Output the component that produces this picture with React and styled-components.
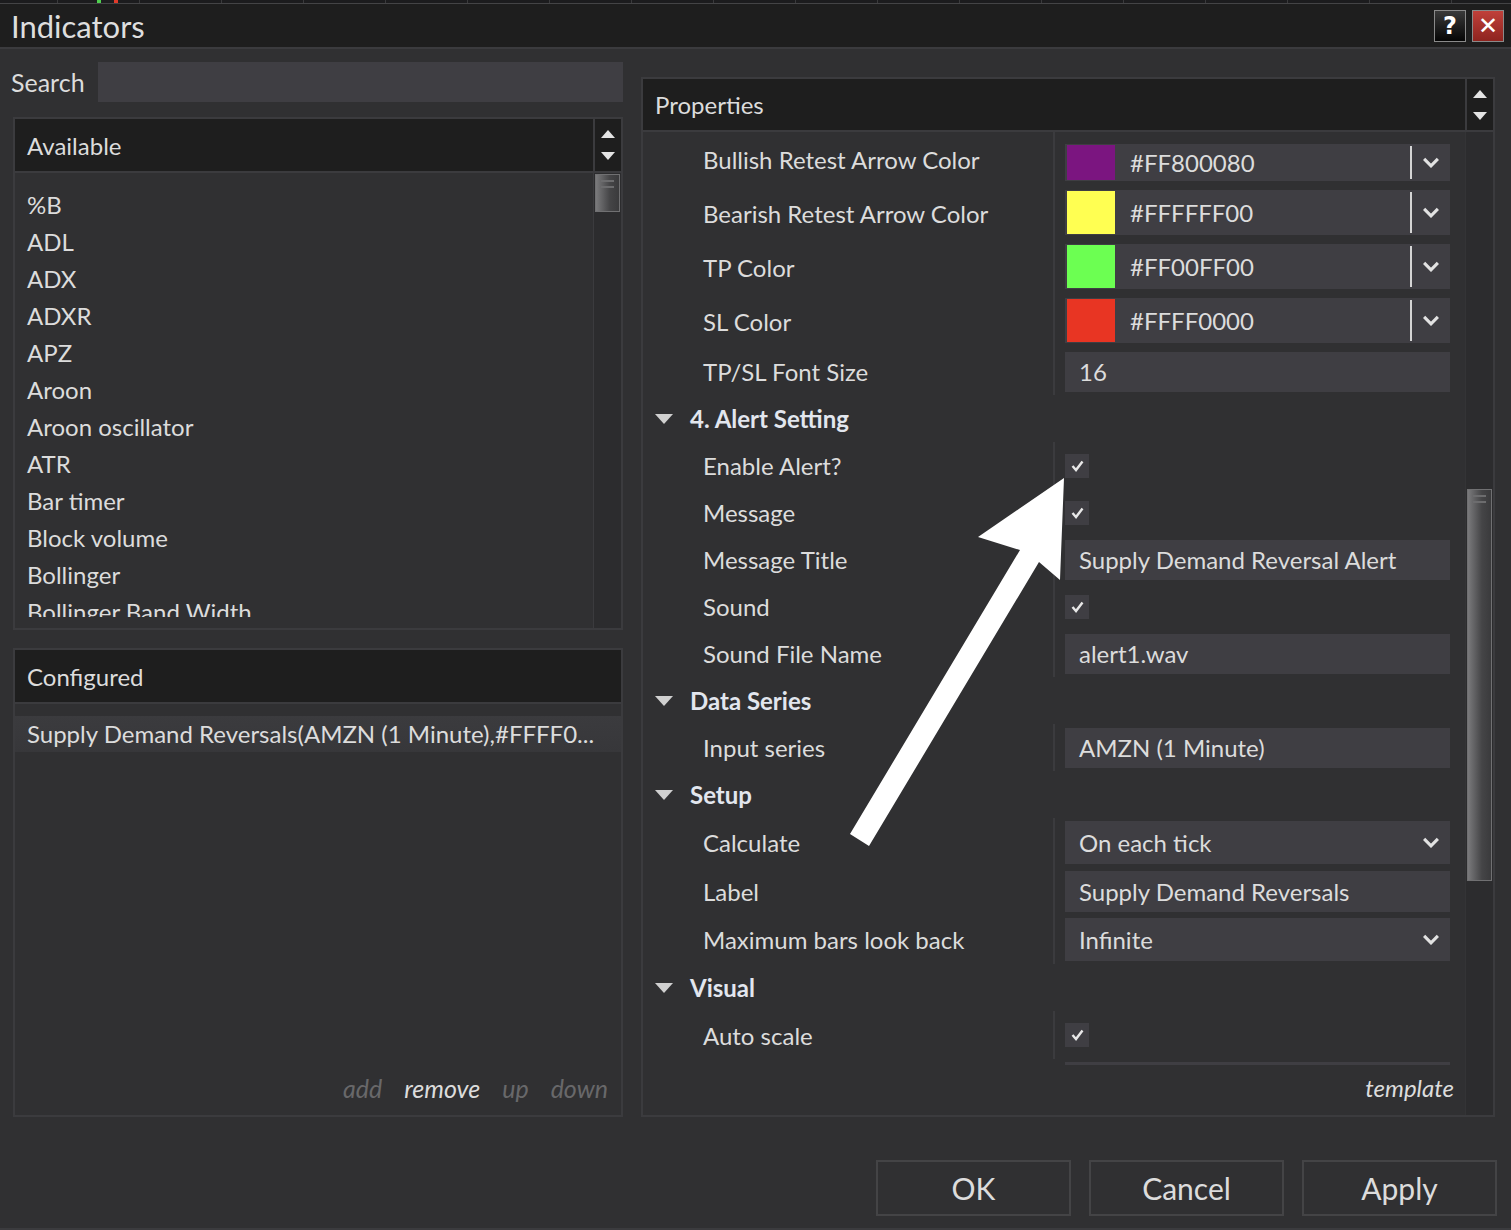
import React from "react"
import styled, { createGlobalStyle } from "styled-components"

const GlobalStyle = createGlobalStyle`
  html, body {
    margin: 0;
    padding: 0;
    background: #303032;
  }
  * {
    box-sizing: border-box;
  }
  body {
    font-family: Lato, "Noto Sans", sans-serif;
    color: #dcdcdc;
  }
`

const Window = styled.div`
  width: 1511px;
  height: 1230px;
  background: #303032;
  display: flex;
  flex-direction: column;
  position: relative;
  overflow: hidden;
  border-bottom: 2px solid #3b3b3e;
`

// remnant of the chart behind the dialog
const TopStrip = styled.div`
  height: 4px;
  background:
    linear-gradient(to right, transparent 97px, #4fd04f 97px, #4fd04f 101px, transparent 101px,
      transparent 114px, #e03a2a 114px, #e03a2a 118px, transparent 118px),
    repeating-linear-gradient(to right, #1c1c1e 0, #1c1c1e 57px, #3a3a3c 57px, #3a3a3c 58px, #1c1c1e 58px, #1c1c1e 82px);
  border-bottom: 1px solid #444446;
`

const TitleBar = styled.div`
  height: 45px;
  background: #1e1e1e;
  border-bottom: 2px solid #3b3b3e;
  display: flex;
  align-items: center;
  padding: 0 7px 0 11px;
`

const Title = styled.div`
  font-size: 31px;
  color: #dedede;
  flex: 1;
`

const TitleButton = styled.div`
  width: 32px;
  height: 32px;
  margin-left: 6px;
  display: flex;
  align-items: center;
  justify-content: center;
  border: 1px solid #8a8a8a;
  color: #fff;
  font-weight: 700;
  font-size: 24px;
  font-family: "DejaVu Sans", sans-serif;
  background: ${(p) =>
    p.danger
      ? "linear-gradient(#c0403a, #8e241f)"
      : "linear-gradient(#3a3a3a, #050505)"};
`

const Main = styled.div`
  display: flex;
  padding: 13px 16px 0 11px;
  gap: 18px;
`

const LeftColumn = styled.div`
  width: 612px;
  display: flex;
  flex-direction: column;
`

const SearchRow = styled.div`
  display: flex;
  align-items: center;
  height: 40px;
  gap: 13px;
`

const Label = styled.div`
  font-size: 25px;
  color: #dcdcdc;
  white-space: nowrap;
`

const SearchInput = styled.div`
  flex: 1;
  height: 40px;
  background: #3f3e43;
`

const Panel = styled.div`
  margin: ${(p) => p.$mt || 0}px 0 0 2px;
  height: ${(p) => p.$h}px;
  border: 2px solid #3b3b3e;
  display: flex;
  flex-direction: column;
  background: #303032;
`

const PanelHeader = styled.div`
  height: ${(p) => p.$h || 54}px;
  flex-shrink: 0;
  background: #1e1e1e;
  border-bottom: 2px solid #3b3b3e;
  display: flex;
  align-items: center;
`

const HeaderText = styled.div`
  flex: 1;
  font-size: 24px;
  color: #dcdcdc;
  padding-left: 12px;
`

const ArrowColumn = styled.div`
  width: 28px;
  align-self: stretch;
  border-left: 2px solid #3b3b3e;
  display: flex;
  flex-direction: column;
  align-items: center;
  justify-content: center;
  gap: 14px;
`

const Triangle = styled.div`
  width: 0;
  height: 0;
  border-left: 7px solid transparent;
  border-right: 7px solid transparent;
  ${(p) =>
    p.up ? "border-bottom: 8px solid #e4e4e4;" : "border-top: 8px solid #e4e4e4;"}
`

const ListBody = styled.div`
  flex: 1;
  display: flex;
  min-height: 0;
`

const ListItems = styled.div`
  flex: 1;
  height: 444px;
  overflow: hidden;
  padding: 13px 0 0 12px;
`

const ListItem = styled.div`
  height: 37px;
  line-height: 37px;
  font-size: 24px;
  color: #dcdcdc;
  white-space: nowrap;
`

const ScrollTrack = styled.div`
  width: 28px;
  background: #2c2c2e;
  border-left: 1px solid #3b3b3e;
  padding-top: ${(p) => p.$offset || 0}px;
`

const Thumb = styled.div`
  height: ${(p) => p.$h}px;
  margin: 0 1px;
  border: 1px solid #707072;
  background: linear-gradient(to right, #7a7a7c, #454547 60%, #3a3a3c);
  position: relative;
  &::before,
  &::after {
    content: "";
    position: absolute;
    left: 5px;
    right: 5px;
    height: 2px;
    background: #6c6c6e;
  }
  &::before {
    top: 5px;
  }
  &::after {
    top: 11px;
  }
`

const ConfiguredBody = styled.div`
  flex: 1;
  display: flex;
  flex-direction: column;
  padding-top: 12px;
`

const SelectedRow = styled.div`
  height: 36px;
  line-height: 36px;
  padding-left: 12px;
  font-size: 24px;
  color: #dcdcdc;
  background: linear-gradient(#3b3b3e, #37373a);
  white-space: nowrap;
`

const LinkBar = styled.div`
  margin-top: auto;
  display: flex;
  justify-content: flex-end;
  gap: 22px;
  padding: 0 13px 12px 0;
`

const LinkText = styled.span`
  font-size: ${(p) => p.$size || 25}px;
  font-style: italic;
  color: ${(p) => (p.active ? "#dcdcdc" : "#68686a")};
`

const RightColumn = styled.div`
  flex: 1;
  margin-top: 15px;
  height: 1040px;
  border: 2px solid #3b3b3e;
  display: flex;
  flex-direction: column;
`

const PropsBody = styled.div`
  flex: 1;
  display: flex;
  min-height: 0;
`

const PropsContent = styled.div`
  flex: 1;
  display: flex;
  flex-direction: column;
`

const RowsViewport = styled.div`
  height: 933px;
  overflow: hidden;
`

const PropRow = styled.div`
  display: flex;
  height: ${(p) => p.$h || 47}px;
`

const PropLabel = styled.div`
  width: 412px;
  flex-shrink: 0;
  padding-left: 60px;
  display: flex;
  align-items: center;
  font-size: 24px;
  color: #dcdcdc;
  border-right: 2px solid #3b3b3e;
  white-space: nowrap;
`

const PropValue = styled.div`
  flex: 1;
  display: flex;
  align-items: ${(p) => p.$align || "center"};
  padding: 0 15px ${(p) => p.$pb || 0}px 10px;
`

const GroupRow = styled.div`
  height: 47px;
  display: flex;
  align-items: center;
  padding-left: 12px;
  gap: 17px;
  font-size: 24px;
  font-weight: 700;
  color: #e2e6ee;
`

const GroupTriangle = styled.div`
  width: 0;
  height: 0;
  border-left: 9px solid transparent;
  border-right: 9px solid transparent;
  border-top: 10px solid #d0d0d0;
`

const ValueBox = styled.div`
  width: 100%;
  height: ${(p) => p.$h || 40}px;
  background: #3f3e43;
  display: flex;
  align-items: center;
  font-size: 24px;
  color: #dcdcdc;
  padding-left: ${(p) => (p.swatch ? 0 : 14)}px;
  white-space: nowrap;
`

const Swatch = styled.div`
  width: 48px;
  align-self: stretch;
  margin: 1px 0 1px 2px;
  background: ${(p) => p.color};
`

const SwatchText = styled.div`
  flex: 1;
  padding-left: ${(p) => (p.$plain ? 0 : 15)}px;
`

const DropSeparator = styled.div`
  width: 2px;
  align-self: stretch;
  margin: 2px 0;
  background: #d4d4d4;
`

const ChevronBox = styled.div`
  width: 38px;
  display: flex;
  align-items: center;
  justify-content: center;
`

const CheckBox = styled.div`
  width: 24px;
  height: 24px;
  background: #3f3e43;
  display: flex;
  align-items: center;
  justify-content: center;
`

const ClippedBox = styled.div`
  margin: 3px 15px 0 422px;
  height: 10px;
  background: #3f3e43;
`

const PropsFooter = styled.div`
  flex: 1;
  display: flex;
  justify-content: flex-end;
  align-items: center;
  padding: 0 11px 6px 0;
`

const PropsScroll = styled.div`
  width: 28px;
  background: #2c2c2e;
  border-left: 1px solid #343436;
  padding-top: 357px;
`

const ButtonRow = styled.div`
  display: flex;
  justify-content: flex-end;
  gap: 18px;
  padding: 43px 14px 0 0;
`

const Button = styled.div`
  width: 195px;
  height: 56px;
  border: 2px solid #444446;
  display: flex;
  align-items: center;
  justify-content: center;
  font-size: 30px;
  color: #dcdcdc;
`

const Overlay = styled.svg`
  position: absolute;
  left: 0;
  top: 0;
  pointer-events: none;
`

const Chevron = ({ size = 18 }) => (
  <svg width={size} height={size * 0.6} viewBox="0 0 18 11">
    <polyline points="2,2 9,9 16,2" fill="none" stroke="#e2e2e2" strokeWidth="3.2" />
  </svg>
)

const Check = () => (
  <svg width="13" height="12" viewBox="0 0 13 12">
    <polyline points="1.5,6 5,10 11.5,1.5" fill="none" stroke="#e8e8e8" strokeWidth="2.4" />
  </svg>
)

const available = [
  "%B", "ADL", "ADX", "ADXR", "APZ", "Aroon", "Aroon oscillator", "ATR",
  "Bar timer", "Block volume", "Bollinger", "Bollinger Band Width",
]

const colorRows = [
  { label: "Bullish Retest Arrow Color", color: "#7b1580", text: "#FF800080", boxH: 37 },
  { label: "Bearish Retest Arrow Color", color: "#ffff52", text: "#FFFFFF00", boxH: 45 },
  { label: "TP Color", color: "#6cff52", text: "#FF00FF00", boxH: 45 },
  { label: "SL Color", color: "#e83523", text: "#FFFF0000", boxH: 45 },
]

const TextRow = ({ label, value, h = 47, boxH = 40 }) => (
  <PropRow $h={h}>
    <PropLabel>{label}</PropLabel>
    <PropValue>
      <ValueBox $h={boxH}>{value}</ValueBox>
    </PropValue>
  </PropRow>
)

const SelectRow = ({ label, value, h = 49, boxH = 43 }) => (
  <PropRow $h={h}>
    <PropLabel>{label}</PropLabel>
    <PropValue>
      <ValueBox $h={boxH}>
        <SwatchText $plain>{value}</SwatchText>
        <ChevronBox>
          <Chevron />
        </ChevronBox>
      </ValueBox>
    </PropValue>
  </PropRow>
)

const CheckRow = ({ label, h = 47 }) => (
  <PropRow $h={h}>
    <PropLabel>{label}</PropLabel>
    <PropValue>
      <CheckBox>
        <Check />
      </CheckBox>
    </PropValue>
  </PropRow>
)

const Group = ({ title }) => (
  <GroupRow>
    <GroupTriangle />
    {title}
  </GroupRow>
)

const App = () => {
  return (
    <>
      <GlobalStyle />
      <Window>
        <TopStrip />
        <TitleBar>
          <Title>Indicators</Title>
          <TitleButton>?</TitleButton>
          <TitleButton danger>✕</TitleButton>
        </TitleBar>

        <Main>
          <LeftColumn>
            <SearchRow>
              <Label>Search</Label>
              <SearchInput />
            </SearchRow>

            <Panel $mt={15} $h={513}>
              <PanelHeader>
                <HeaderText>Available</HeaderText>
                <ArrowColumn>
                  <Triangle up />
                  <Triangle />
                </ArrowColumn>
              </PanelHeader>
              <ListBody>
                <ListItems>
                  {available.map((name) => (
                    <ListItem key={name}>{name}</ListItem>
                  ))}
                </ListItems>
                <ScrollTrack $offset={1}>
                  <Thumb $h={38} />
                </ScrollTrack>
              </ListBody>
            </Panel>

            <Panel $mt={18} $h={469}>
              <PanelHeader>
                <HeaderText>Configured</HeaderText>
              </PanelHeader>
              <ConfiguredBody>
                <SelectedRow>Supply Demand Reversals(AMZN (1 Minute),#FFFF0...</SelectedRow>
                <LinkBar>
                  <LinkText>add</LinkText>
                  <LinkText active>remove</LinkText>
                  <LinkText>up</LinkText>
                  <LinkText>down</LinkText>
                </LinkBar>
              </ConfiguredBody>
            </Panel>
          </LeftColumn>

          <RightColumn>
            <PanelHeader $h={53}>
              <HeaderText>Properties</HeaderText>
              <ArrowColumn>
                <Triangle up />
                <Triangle />
              </ArrowColumn>
            </PanelHeader>
            <PropsBody>
              <PropsContent>
                <RowsViewport>
                  {colorRows.map((r) => (
                    <PropRow key={r.label} $h={54}>
                      <PropLabel>{r.label}</PropLabel>
                      <PropValue $align="flex-end" $pb={5}>
                        <ValueBox swatch $h={r.boxH}>
                          <Swatch color={r.color} />
                          <SwatchText>{r.text}</SwatchText>
                          <DropSeparator />
                          <ChevronBox>
                            <Chevron />
                          </ChevronBox>
                        </ValueBox>
                      </PropValue>
                    </PropRow>
                  ))}
                  <TextRow label="TP/SL Font Size" value="16" />
                  <Group title="4. Alert Setting" />
                  <CheckRow label="Enable Alert?" />
                  <CheckRow label="Message" />
                  <TextRow label="Message Title" value="Supply Demand Reversal Alert" />
                  <CheckRow label="Sound" />
                  <TextRow label="Sound File Name" value="alert1.wav" />
                  <Group title="Data Series" />
                  <TextRow label="Input series" value="AMZN (1 Minute)" />
                  <Group title="Setup" />
                  <SelectRow label="Calculate" value="On each tick" />
                  <TextRow label="Label" value="Supply Demand Reversals" h={48} boxH={41} />
                  <SelectRow label="Maximum bars look back" value="Infinite" />
                  <Group title="Visual" />
                  <CheckRow label="Auto scale" h={48} />
                  <ClippedBox />
                </RowsViewport>
                <PropsFooter>
                  <LinkText active $size={24}>template</LinkText>
                </PropsFooter>
              </PropsContent>
              <PropsScroll>
                <Thumb $h={392} />
              </PropsScroll>
            </PropsBody>
          </RightColumn>
        </Main>

        <ButtonRow>
          <Button>OK</Button>
          <Button>Cancel</Button>
          <Button>Apply</Button>
        </ButtonRow>

        <Overlay width="1511" height="1230">
          <polygon
            points="850,834 1020,550 978,537 1064,478 1060,580 1039,562 869,846"
            fill="#ffffff"
          />
        </Overlay>
      </Window>
    </>
  )
}

export default App
